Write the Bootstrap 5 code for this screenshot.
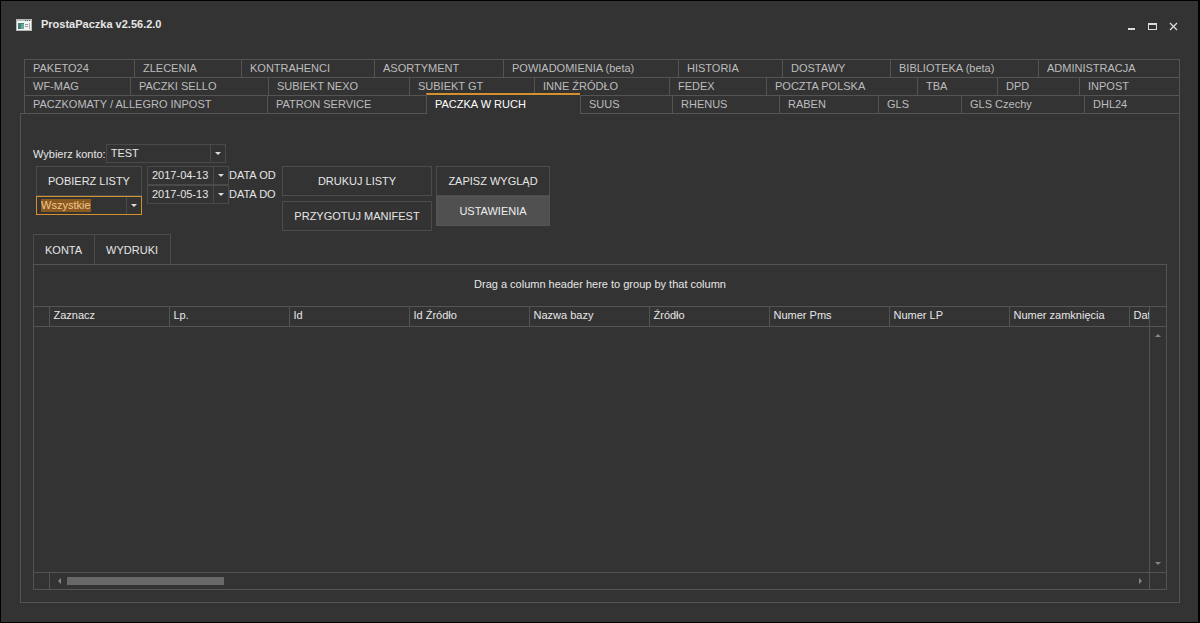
<!DOCTYPE html>
<html lang="pl">
<head>
<meta charset="utf-8">
<meta name="viewport" content="width=device-width, initial-scale=1">
<title>ProstaPaczka v2.56.2.0</title>
<link href="https://cdn.jsdelivr.net/npm/bootstrap@5.3.0/dist/css/bootstrap.min.css" rel="stylesheet">
<style>
:root { --line: #545454; --face: #333; --ink: #e6e6e6; --accent: #d5912f; }
body { font: 11px/18px "Liberation Sans", Arial, sans-serif; background: var(--face); color: var(--ink); }
.app-window { border: 1px solid #000; border-right-width: 2px; padding: 0 18px 19px 19px; }
.title-bar { height: 58px; padding: 0 1px 0 15px; margin-left: -19px; }
.app-title { font-size: 11px; font-weight: 700; line-height: 18px; padding-top: 14px; margin-left: 9px; }
.app-icon { margin-top: 16px; }
.win-buttons { padding-top: 20px; gap: 10px; }
.win-btn { width: 11px; height: 11px; color: #dcdcdc; background: none; border: 0; padding: 0; display: flex; }
.tab-rows { margin-left: 4px; border-left: 1px solid var(--line); border-right: 1px solid var(--line); }
.tab-row { display: grid; height: 18px; border-top: 1px solid var(--line); }
.tab-row .nav-link { padding: 0 0 0 8px; line-height: 17px; height: 17px; color: #bdbdbd; border-left: 1px solid var(--line); white-space: nowrap; border-radius: 0; }
.tab-row .nav-link:first-child { border-left: 0; }
.tab-row .nav-link.active { color: #fff; background: var(--face); height: 21px; margin-top: -3px; border-top: 2px solid var(--accent); position: relative; z-index: 1; line-height: 19px; }
.row-a { grid-template-columns: 109fr 107fr 133fr 129fr 175fr 104fr 108fr 148fr 141fr; }
.row-b { grid-template-columns: 105fr 138fr 141fr 125fr 135fr 97fr 151fr 80fr 82fr 100fr; }
.row-c { grid-template-columns: 242fr 159fr 154fr 92fr 107fr 99fr 83fr 123fr 95fr; }
.page-panel { border: 1px solid var(--line); padding: 30px 12px 12px; }
.box-btn { font-size: 11px; line-height: 18px; height: 30px; padding: 0; color: var(--ink); border: 1px solid #4c4c4c; border-radius: 0; background: var(--face); }
.box-btn:hover, .box-btn.lit { background: #505050; border-color: #555; color: #eee; }
.combo { display: flex; height: 19px; border: 1px solid #4a4a4a; }
.combo select, .combo input { appearance: none; flex: 1; min-width: 0; background: none; border: 0; outline: 0; color: var(--ink); font-size: 11px; line-height: 17px; padding: 0 0 0 4px; height: 17px; }
.combo option { background: var(--face); }
.combo-arrow { width: 15px; flex: none; border: 0; border-left: 1px solid #4a4a4a; background: none; padding: 0; display: flex; align-items: center; justify-content: center; }
.combo-arrow::before { content: ""; border: 3px solid transparent; border-top-color: #ddd; border-bottom: 0; }
.combo.focused { border-color: var(--accent); }
.combo.focused select { color: #f0c58e; background: linear-gradient(#8b5a20, #8b5a20) 4px 2px / 50px 13px no-repeat; }
.w-account { width: 120px; }
.w-filter { width: 106px; margin-right: 5px; }
.w-date { width: 82px; }
.date-fields { width: 135px; }
.w-print { width: 150px; gap: 5px; margin-right: 4px; }
.w-view { width: 114px; }
.controls { margin: 3px 0 3px 3px; }
.sub-bar .box-btn { padding: 0 12px 0 11px; border-bottom: 0; }
.sub-bar .box-btn + .box-btn { border-left: 0; }
.data-grid { border: 1px solid var(--line); }
.group-hint { height: 41px; line-height: 38px; text-align: center; }
.head-strip { border-top: 1px solid var(--line); border-bottom: 1px solid var(--line); height: 21px; }
.head-clip { min-width: 0; flex: 1 1 0; overflow: hidden; }
.head-clip table { table-layout: fixed; width: 1215px; line-height: 17px; }
.head-clip th { width: 120px; padding: 0 0 2px 4px; height: 19px; font-weight: 400; border-left: 1px solid var(--line); white-space: nowrap; }
.head-clip th:first-child { width: 15px; border-left: 0; padding: 0; }
.side-cell { width: 17px; flex: none; border-left: 1px solid var(--line); }
.grid-body .side-cell { padding: 6px 0; }
.scroll-arrow { fill: #858585; }
.bottom-strip { height: 17px; border-top: 1px solid var(--line); }
.row-mark { width: 16px; border-right: 1px solid var(--line); }
.h-track { padding: 0 6px 0 7px; }
.thumb { width: 14.5%; height: 8px; margin-left: 5px; background: #686868; }
</style>
</head>
<body>
<div class="app-window min-vh-100 d-flex flex-column">
  <header class="title-bar d-flex align-items-start">
    <svg class="app-icon" width="16" height="14" viewBox="0 0 16 14"><path fill="#b9b9b9" d="M0 2h16v12H0z"/><path fill="#f4f4f4" d="M1 4h14v9H1z"/><path fill="#3f8277" d="M2 6h6v6H2z"/><path fill="#6ea79d" d="M5 7h3v5H5z"/><path fill="#999" d="M9 7h3v1H9zM9 9h3v1H9z"/><path fill="#aaa" d="M13 6h1v6h-1z"/><path fill="#42666f" d="M9 3h1v1H9zM11 3h1v1h-1zM13 3h1v1h-1z"/></svg>
    <h1 class="app-title mb-0">ProstaPaczka v2.56.2.0</h1>
    <div class="win-buttons d-flex ms-auto">
      <button class="win-btn" type="button" aria-label="Minimalizuj"><svg width="11" height="11"><path fill="currentColor" d="M2 7h7v2H2z"/></svg></button>
      <button class="win-btn" type="button" aria-label="Maksymalizuj"><svg width="11" height="11"><path fill="currentColor" fill-rule="evenodd" d="M1 2h9v7H1zM2 4v4h7V4z"/></svg></button>
      <button class="win-btn" type="button" aria-label="Zamknij"><svg width="11" height="11"><path stroke="currentColor" stroke-width="1.3" d="M2 2l7 7M9 2L2 9"/></svg></button>
    </div>
  </header>

  <nav class="tab-rows" aria-label="Moduły">
    <div class="tab-row row-a">
      <a class="nav-link" href="#">PAKETO24</a><a class="nav-link" href="#">ZLECENIA</a><a class="nav-link" href="#">KONTRAHENCI</a><a class="nav-link" href="#">ASORTYMENT</a><a class="nav-link" href="#">POWIADOMIENIA (beta)</a><a class="nav-link" href="#">HISTORIA</a><a class="nav-link" href="#">DOSTAWY</a><a class="nav-link" href="#">BIBLIOTEKA (beta)</a><a class="nav-link" href="#">ADMINISTRACJA</a>
    </div>
    <div class="tab-row row-b">
      <a class="nav-link" href="#">WF-MAG</a><a class="nav-link" href="#">PACZKI SELLO</a><a class="nav-link" href="#">SUBIEKT NEXO</a><a class="nav-link" href="#">SUBIEKT GT</a><a class="nav-link" href="#">INNE ŹRÓDŁO</a><a class="nav-link" href="#">FEDEX</a><a class="nav-link" href="#">POCZTA POLSKA</a><a class="nav-link" href="#">TBA</a><a class="nav-link" href="#">DPD</a><a class="nav-link" href="#">INPOST</a>
    </div>
    <div class="tab-row row-c">
      <a class="nav-link" href="#">PACZKOMATY / ALLEGRO INPOST</a><a class="nav-link" href="#">PATRON SERVICE</a><a class="nav-link active" aria-current="page" href="#">PACZKA W RUCH</a><a class="nav-link" href="#">SUUS</a><a class="nav-link" href="#">RHENUS</a><a class="nav-link" href="#">RABEN</a><a class="nav-link" href="#">GLS</a><a class="nav-link" href="#">GLS Czechy</a><a class="nav-link" href="#">DHL24</a>
    </div>
  </nav>

  <main class="page-panel flex-grow-1 d-flex flex-column">
    <div class="d-flex align-items-center">
      <label for="account">Wybierz konto:</label>
      <div class="combo w-account"><select id="account"><option>TEST</option></select><span class="combo-arrow"></span></div>
    </div>

    <div class="controls d-flex align-items-start">
      <div class="d-flex flex-column w-filter">
        <button class="btn box-btn" type="button">POBIERZ LISTY</button>
        <div class="combo focused"><select aria-label="Filtr listów"><option>Wszystkie</option></select><span class="combo-arrow"></span></div>
      </div>
      <div class="date-fields">
        <div class="d-flex"><div class="combo w-date"><input id="from" type="text" value="2017-04-13"><button class="combo-arrow" type="button" aria-label="Kalendarz od"></button></div><label for="from">DATA OD</label></div>
        <div class="d-flex"><div class="combo w-date"><input id="to" type="text" value="2017-05-13"><button class="combo-arrow" type="button" aria-label="Kalendarz do"></button></div><label for="to">DATA DO</label></div>
      </div>
      <div class="d-flex flex-column w-print">
        <button class="btn box-btn" type="button">DRUKUJ LISTY</button>
        <button class="btn box-btn" type="button">PRZYGOTUJ MANIFEST</button>
      </div>
      <div class="d-flex flex-column w-view">
        <button class="btn box-btn" type="button">ZAPISZ WYGLĄD</button>
        <button class="btn box-btn lit" type="button">USTAWIENIA</button>
      </div>
    </div>

    <div class="sub-bar d-flex">
      <button class="btn box-btn" type="button">KONTA</button>
      <button class="btn box-btn" type="button">WYDRUKI</button>
    </div>

    <section class="data-grid flex-grow-1 d-flex flex-column">
      <div class="group-hint">Drag a column header here to group by that column</div>
      <div class="head-strip d-flex">
        <div class="head-clip">
          <table><thead><tr><th></th><th>Zaznacz</th><th>Lp.</th><th>Id</th><th>Id Źródło</th><th>Nazwa bazy</th><th>Źródło</th><th>Numer Pms</th><th>Numer LP</th><th>Numer zamknięcia</th><th>Data</th></tr></thead></table>
        </div>
        <div class="side-cell"></div>
      </div>
      <div class="grid-body d-flex flex-grow-1 justify-content-end">
        <div class="side-cell d-flex flex-column align-items-center justify-content-between">
          <svg class="scroll-arrow" width="6" height="5"><path d="M0 4l3-3 3 3z"/></svg>
          <svg class="scroll-arrow" width="6" height="5"><path d="M0 1l3 3 3-3z"/></svg>
        </div>
      </div>
      <div class="bottom-strip d-flex">
        <div class="row-mark"></div>
        <div class="h-track flex-grow-1 d-flex align-items-center">
          <svg class="scroll-arrow" width="5" height="6"><path d="M4 0L1 3l3 3z"/></svg>
          <div class="thumb"></div>
          <svg class="scroll-arrow ms-auto" width="5" height="6"><path d="M1 0l3 3-3 3z"/></svg>
        </div>
        <div class="side-cell"></div>
      </div>
    </section>
  </main>
</div>
<script src="https://cdn.jsdelivr.net/npm/bootstrap@5.3.0/dist/js/bootstrap.bundle.min.js"></script>
</body>
</html>
